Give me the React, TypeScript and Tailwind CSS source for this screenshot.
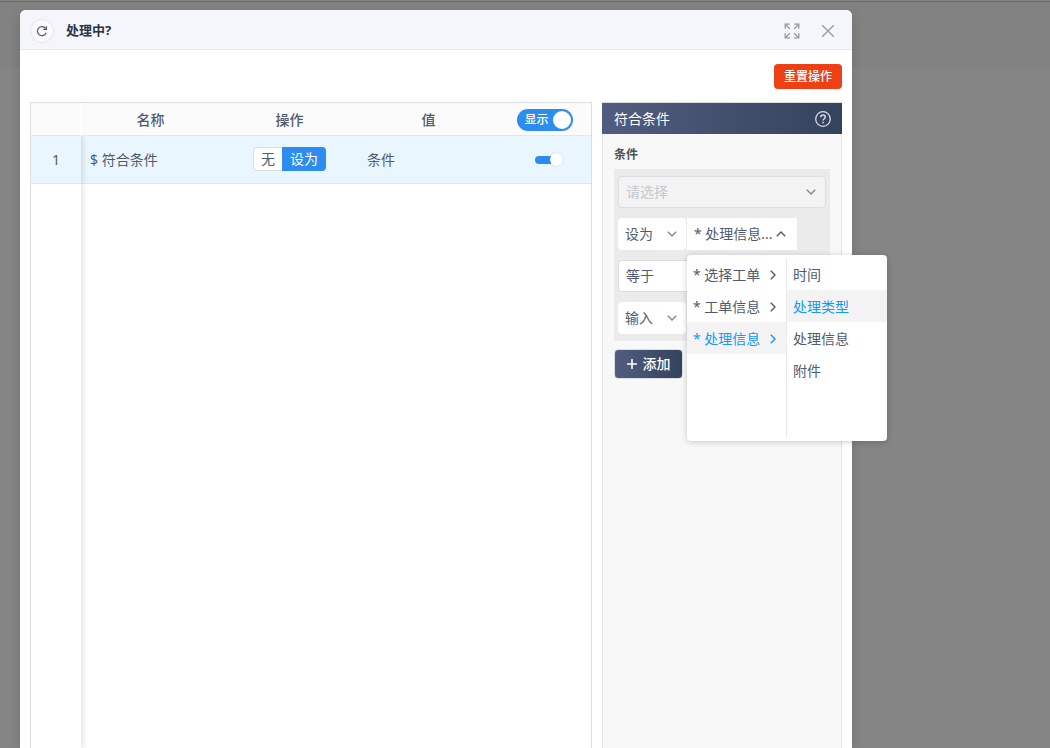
import React, { useState } from "react";

type IconProps = { className?: string };

function Chevron({ className = "" }: IconProps) {
  return (
    <svg viewBox="0 0 12 12" className={"size-3 " + className} fill="none" stroke="currentColor" strokeWidth="1.4" aria-hidden="true">
      <path d="M1.8 3.8 6 8l4.2-4.2" />
    </svg>
  );
}

function RefreshIcon() {
  return (
    <svg viewBox="0 0 12 12" className="size-3" fill="none" stroke="currentColor" strokeWidth="1.2" aria-hidden="true">
      <path d="M10.2 7.6A4.5 4.5 0 1 1 9.6 3.6" />
      <path d="M10.4 1.2v3.1H7.3" />
    </svg>
  );
}

function ExpandIcon() {
  return (
    <svg viewBox="0 0 16 16" className="size-4" fill="none" stroke="currentColor" strokeWidth="1.3" aria-hidden="true">
      <path d="M1.2 5.8V1.2h4.6M10.2 1.2h4.6v4.6M14.8 10.2v4.6h-4.6M5.8 14.8H1.2v-4.6" />
      <path d="m1.5 1.5 4.3 4.3M14.5 1.5l-4.3 4.3M14.5 14.5l-4.3-4.3M1.5 14.5l4.3-4.3" />
    </svg>
  );
}

function CloseIcon() {
  return (
    <svg viewBox="0 0 14 14" className="size-3.5" fill="none" stroke="currentColor" strokeWidth="1.3" aria-hidden="true">
      <path d="m1.2 1.2 11.6 11.6M12.8 1.2 1.2 12.8" />
    </svg>
  );
}

function HelpIcon() {
  return (
    <svg viewBox="0 0 16 16" className="size-4" fill="none" stroke="currentColor" strokeWidth="1.3" aria-hidden="true">
      <circle cx="8" cy="8" r="7.3" />
      <path d="M5.8 6.3c0-1.4 1-2.2 2.2-2.2s2.3.8 2.3 2c0 1.6-2.2 1.7-2.2 3.5" strokeWidth="1.5" />
      <path d="M8.1 10.7v1.5" strokeWidth="1.5" />
    </svg>
  );
}

function PlusIcon() {
  return (
    <svg viewBox="0 0 10 10" className="size-2.5" fill="none" stroke="currentColor" strokeWidth="1.6" aria-hidden="true">
      <path d="M5 0v10M0 5h10" />
    </svg>
  );
}

type SelectProps = {
  label: string;
  options: string[];
  className: string;
  disabled?: boolean;
};

function SelectBox({ label, options, className, disabled }: SelectProps) {
  return (
    <div className={"grid h-8 items-center " + className}>
      <select
        aria-label={label}
        disabled={disabled}
        className="col-start-1 row-start-1 h-full w-full appearance-none bg-transparent px-[7px] text-sm outline-none"
      >
        {options.map((option) => (
          <option key={option}>{option}</option>
        ))}
      </select>
      <Chevron className="pointer-events-none col-start-1 row-start-1 mr-2 justify-self-end text-[#808695]" />
    </div>
  );
}

const groups: Record<string, string[]> = {
  选择工单: ["工单"],
  工单信息: ["标题"],
  处理信息: ["时间", "处理类型", "处理信息", "附件"],
};

function CascadeMenu({ onPick }: { onPick: () => void }) {
  const [group, setGroup] = useState("处理信息");
  const [item, setItem] = useState("处理类型");
  return (
    <div className="absolute top-full left-0 z-10 mt-[5px] flex h-[186px] rounded bg-white py-[3px] shadow-[0_1px_6px_rgba(0,0,0,0.2)]">
      <ul className="w-[100px] border-r border-[#e8eaec]">
        {Object.keys(groups).map((name) => (
          <li key={name}>
            <button
              type="button"
              onClick={() => setGroup(name)}
              className={
                "flex h-8 w-full items-center justify-between pt-0.5 pr-[7px] pl-1.5 text-sm whitespace-nowrap " +
                (name === group ? "bg-[#f3f3f3] text-[#1296ff]" : "text-[#515a6e]")
              }
            >
              <span>* {name}</span>
              <Chevron className="-rotate-90" />
            </button>
          </li>
        ))}
      </ul>
      <ul className="w-[100px]">
        {groups[group].map((name) => (
          <li key={name}>
            <button
              type="button"
              onClick={() => {
                setItem(name);
                onPick();
              }}
              className={
                "flex h-8 w-full items-center px-1.5 pt-0.5 text-sm " +
                (name === item ? "bg-[#f3f3f3] text-[#1296ff]" : "text-[#515a6e]")
              }
            >
              {name}
            </button>
          </li>
        ))}
      </ul>
    </div>
  );
}

function ConditionPanel() {
  const [open, setOpen] = useState(true);
  return (
    <aside className="flex w-60 flex-col border-t border-[#dcdee2]">
      <header className="flex h-[31px] items-center justify-between bg-linear-to-r from-[#515d80] to-[#34435c] pr-[11px] pl-3 text-sm text-white">
        <h2>符合条件</h2>
        <button type="button" aria-label="帮助" className="text-[#d8dce4]">
          <HelpIcon />
        </button>
      </header>
      <div className="flex-1 border-x border-[#e3e4e6] bg-[#f8f8f8] px-[11px] pt-3">
        <h3 className="h-[23px] text-xs leading-[18px] font-bold text-[#515151]">条件</h3>
        <div className="flex flex-col gap-2.5 bg-[#ebebeb] px-1 py-[7px]">
          <SelectBox label="条件" options={["请选择"]} disabled className="rounded border border-[#dcdee2] bg-[#f3f3f3] text-[#c5c8ce]" />
          <div className="flex gap-px">
            <SelectBox label="设为方式" options={["设为", "无"]} className="w-[68px] rounded-sm bg-white text-[#515a6e]" />
            <div className="relative">
              <button
                type="button"
                aria-haspopup="menu"
                aria-expanded={open}
                onClick={() => setOpen(!open)}
                className="flex h-8 w-[110px] items-center justify-between bg-white pr-2.5 pl-[7px] text-sm text-[#515a6e]"
              >
                <span className="truncate">* 处理信息...</span>
                <Chevron className="shrink-0 rotate-180" />
              </button>
              {open && <CascadeMenu onPick={() => setOpen(false)} />}
            </div>
          </div>
          <SelectBox label="比较" options={["等于", "不等于"]} className="rounded border border-[#dcdee2] bg-white text-[#515a6e]" />
          <SelectBox label="值来源" options={["输入", "设为"]} className="w-[68px] rounded-sm bg-white text-[#515a6e]" />
        </div>
        <button
          type="button"
          className="mt-2 flex h-[30px] w-[69px] items-center justify-center gap-1.5 rounded-sm border border-[#dcdee2] bg-linear-to-r from-[#515d80] to-[#34435c] text-sm font-medium text-white"
        >
          <PlusIcon />
          添加
        </button>
      </div>
    </aside>
  );
}

function OperationTable() {
  return (
    <section className="flex min-w-0 flex-1 flex-col border border-b-0 border-[#dcdee2]">
      <table className="w-full table-fixed border-separate border-spacing-0 text-sm text-[#515a6e]">
        <colgroup>
          <col className="w-[50px]" />
          <col />
          <col />
          <col />
          <col className="w-[93px]" />
        </colgroup>
        <thead>
          <tr className="h-[33px] bg-[#fbfbfb]">
            <th aria-label="序号" className="border-r border-b border-r-white border-b-[#e4e7eb]" />
            <th className="border-b border-[#e4e7eb] pt-0.5 font-medium">名称</th>
            <th className="border-b border-[#e4e7eb] pt-0.5 font-medium">操作</th>
            <th className="border-b border-[#e4e7eb] pt-0.5 font-medium">值</th>
            <th className="border-b border-[#e4e7eb] pt-0.5">
              <label className="mx-auto flex h-[22px] w-14 cursor-pointer items-center justify-between rounded-full bg-[#2d8cf0] pr-0.5 pl-2 text-xs font-medium text-white">
                <input type="checkbox" defaultChecked className="sr-only" />
                显示
                <span className="size-[18px] rounded-full bg-white" />
              </label>
            </th>
          </tr>
        </thead>
        <tbody>
          <tr className="h-12 bg-[#e9f6fe]">
            <td className="border-b border-[#dde6ec] text-center shadow-[2px_0_5px_rgba(0,0,0,0.12)] [clip-path:inset(0_-8px_0_0)]">1</td>
            <td className="border-b border-[#dde6ec] pl-[9px]">$ 符合条件</td>
            <td className="border-b border-[#dde6ec] pb-px">
              <div role="radiogroup" aria-label="操作" className="flex justify-center">
                <label className="flex h-6 items-center rounded-l-sm border border-r-0 border-[#dcdee2] bg-white px-[7px]">
                  <input type="radio" name="operation" className="sr-only" />无
                </label>
                <label className="flex h-6 items-center rounded-r-sm bg-[#2d8cf0] px-2 text-white">
                  <input type="radio" name="operation" defaultChecked className="sr-only" />
                  设为
                </label>
              </div>
            </td>
            <td className="border-b border-[#dde6ec] pl-2">条件</td>
            <td className="border-b border-[#dde6ec] pl-2">
              <label className="mx-auto flex h-2 w-7 cursor-pointer items-center">
                <input type="checkbox" defaultChecked aria-label="显示符合条件" className="sr-only" />
                <span className="h-2 flex-1 rounded-l-full bg-[#2d8cf0]" />
                <span className="-ml-px size-[13px] rounded-full bg-white shadow-[0_0_2px_rgba(0,0,0,0.15)]" />
              </label>
            </td>
          </tr>
        </tbody>
      </table>
      <div className="w-[50px] flex-1 shadow-[2px_0_5px_rgba(0,0,0,0.12)] [clip-path:inset(0_-8px_0_0)]" />
    </section>
  );
}

export default function App() {
  return (
    <div className="flex h-screen flex-col overflow-hidden bg-[linear-gradient(#828282_0_68px,#858585_68px)] font-['Noto_Sans','Noto_Sans_CJK_SC',sans-serif]">
      <div className="h-2.5 shrink-0 pt-px">
        <div className="h-px bg-[#6c6c6c]" />
      </div>
      <div
        role="dialog"
        aria-label="处理中?"
        className="mr-[198px] ml-5 flex flex-1 flex-col rounded-t-md bg-white shadow-[0_4px_12px_rgba(0,0,0,0.15)]"
      >
        <header className="flex h-10 shrink-0 items-center rounded-t-md border-b border-[#e4e7ed] bg-[#f5f6fb] pt-0.5 pr-[17px] pl-2.5">
          <button
            type="button"
            aria-label="刷新"
            className="flex size-6 items-center justify-center rounded-full border border-[#e6e6e6] bg-[#fafafa] text-[#515a6e]"
          >
            <RefreshIcon />
          </button>
          <h1 className="ml-3 flex-1 text-[13px] font-bold text-[#2b3347]">处理中?</h1>
          <div className="flex items-center gap-[21px] text-[#999999]">
            <button type="button" aria-label="全屏">
              <ExpandIcon />
            </button>
            <button type="button" aria-label="关闭">
              <CloseIcon />
            </button>
          </div>
        </header>
        <main className="flex min-h-0 flex-1 flex-col px-2.5 pt-3.5">
          <button
            type="button"
            className="mb-[13px] h-[25px] w-[68px] shrink-0 self-end rounded bg-[#ed4014] text-xs font-medium text-white"
          >
            重置操作
          </button>
          <div className="flex min-h-0 flex-1 gap-2.5">
            <OperationTable />
            <ConditionPanel />
          </div>
        </main>
      </div>
    </div>
  );
}
